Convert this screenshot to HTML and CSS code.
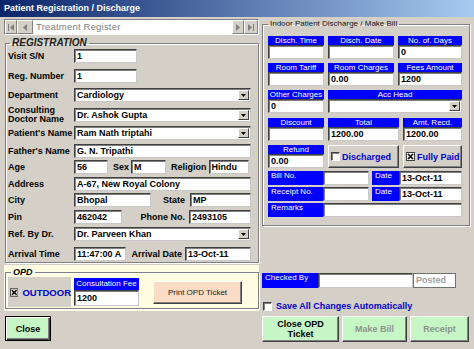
FILE: index.html
```html
<!DOCTYPE html>
<html>

<head>
  <meta charset="UTF-8">
  <title>Patient Registration / Discharge</title>
  <link rel="stylesheet" href="styles.css">
</head>

<body>
  <div class="window">
    <div class="titlebar">Patient Registration / Discharge</div>

    <div class="panes">
      <!-- left side: registration + OPD -->
      <div class="left">
        <div class="navbar">
          <span class="navbtn"><svg width="6" height="7" viewBox="0 0 6 7"><rect x="0" y="0" width="1" height="7" /><path d="M6 0L2 3.5L6 7z" /></svg></span>
          <span class="navbtn wide"><svg width="4" height="7" viewBox="0 0 4 7"><path d="M4 0L0 3.5L4 7z" /></svg></span>
          <span class="navtext">Treatment Register</span>
          <span class="navbtn"><svg width="4" height="7" viewBox="0 0 4 7"><path d="M0 0L4 3.5L0 7z" /></svg></span>
          <span class="navbtn last"><svg width="6" height="7" viewBox="0 0 6 7"><path d="M0 0L4 3.5L0 7z" /><rect x="5" y="0" width="1" height="7" /></svg></span>
        </div>

        <fieldset class="group reg">
          <legend>REGISTRATION</legend>
          <div class="frow"><span class="lbl">Visit S/N</span><span class="field w63">1</span></div>
          <div class="frow gap6"><span class="lbl">Reg. Number</span><span class="field w63">1</span></div>
          <div class="frow gap5"><span class="lbl">Department</span><span class="field select">Cardiology<i class="drop"><svg width="5" height="3" viewBox="0 0 5 3"><path d="M0 0H5L2.5 3z" /></svg></i></span></div>
          <div class="frow gap6"><span class="lbl two">Consulting<br>Doctor Name</span><span class="field select">Dr. Ashok Gupta<i class="drop"><svg width="5" height="3" viewBox="0 0 5 3"><path d="M0 0H5L2.5 3z" /></svg></i></span></div>
          <div class="frow gap4"><span class="lbl">Patient's Name</span><span class="field select">Ram Nath triptahi<i class="drop"><svg width="5" height="3" viewBox="0 0 5 3"><path d="M0 0H5L2.5 3z" /></svg></i></span></div>
          <div class="frow gap4"><span class="lbl">Father's Name</span><span class="field grow">G. N. Tripathi</span></div>
          <div class="frow gap2">
            <span class="lbl">Age</span><span class="field w34">56</span>
            <span class="sub">Sex</span><span class="field w35">M</span>
            <span class="sub">Religion</span><span class="field w40">Hindu</span>
          </div>
          <div class="frow"><span class="lbl">Address</span><span class="field grow">A-67, New Royal Colony</span></div>
          <div class="frow gap2">
            <span class="lbl">City</span><span class="field w77">Bhopal</span>
            <span class="sub push m5">State</span><span class="field w61">MP</span>
          </div>
          <div class="frow">
            <span class="lbl">Pin</span><span class="field w48">462042</span>
            <span class="sub push m4">Phone No.</span><span class="field w62">2493105</span>
          </div>
          <div class="frow"><span class="lbl">Ref. By Dr.</span><span class="field select">Dr. Parveen Khan<i class="drop"><svg width="5" height="3" viewBox="0 0 5 3"><path d="M0 0H5L2.5 3z" /></svg></i></span></div>
          <div class="frow gap6">
            <span class="lbl">Arrival Time</span><span class="field w52">11:47:00 A</span>
            <span class="sub push m3">Arrival Date</span><span class="field w66">13-Oct-11</span>
          </div>
        </fieldset>

        <div class="opd">
          <fieldset class="group">
            <legend>OPD</legend>
            <div class="opd-body">
              <div class="outdoor">
                <svg width="9" height="9" viewBox="0 0 9 9"><rect x="0.5" y="0.5" width="8" height="8" fill="#e8e8e8" stroke="#404040" /><path d="M2 2L7 7M7 2L2 7" stroke="#000" stroke-width="1.6" /></svg>
                OUTDOOR
              </div>
              <div class="fee">
                <span class="head tall">Consultation Fee</span>
                <span class="field big">1200</span>
              </div>
              <button class="print-btn">Print OPD Ticket</button>
            </div>
          </fieldset>
        </div>

        <button class="btn close-btn">Close</button>
      </div>

      <!-- right side: discharge / bill -->
      <div class="right">
        <fieldset class="group indoor">
          <legend>Indoor Patient Discharge / Make Bill</legend>
          <div class="bill-row">
            <div class="cell c56"><span class="head">Disch. Time</span><span class="field"></span></div>
            <div class="cell c66"><span class="head">Disch. Date</span><span class="field"></span></div>
            <div class="cell c64"><span class="head">No. of. Days</span><span class="field">0</span></div>
          </div>
          <div class="bill-row">
            <div class="cell c56"><span class="head">Room Tariff</span><span class="field"></span></div>
            <div class="cell c66"><span class="head">Room Charges</span><span class="field">0.00</span></div>
            <div class="cell c64"><span class="head">Fees Amount</span><span class="field">1200</span></div>
          </div>
          <div class="bill-row">
            <div class="cell c56"><span class="head">Other Charges</span><span class="field">0</span></div>
            <div class="cell c134"><span class="head">Acc Head</span><span class="field select"><span></span><i class="drop"><svg width="5" height="3" viewBox="0 0 5 3"><path d="M0 0H5L2.5 3z" /></svg></i></span></div>
          </div>
          <div class="bill-row gap5">
            <div class="cell c56"><span class="head">Discount</span><span class="field"></span></div>
            <div class="cell c71"><span class="head">Total</span><span class="field">1200.00</span></div>
            <div class="cell c59"><span class="head">Amt. Recd.</span><span class="field">1200.00</span></div>
          </div>
          <div class="bill-row">
            <div class="cell c56"><span class="head">Refund</span><span class="field">0.00</span></div>
            <div class="toggle c71"><span class="chk"></span>Discharged</div>
            <div class="toggle c59">
              <svg width="9" height="9" viewBox="0 0 9 9"><rect x="0.5" y="0.5" width="8" height="8" fill="#f4f4f4" stroke="#404040" /><path d="M2 2L7 7M7 2L2 7" stroke="#000" stroke-width="1.6" /></svg>
              Fully Paid
            </div>
          </div>
          <div class="line-row first">
            <span class="tag t55">Bill No.</span><span class="field w46"></span>
            <span class="tag t27 m3">Date</span><span class="field grow">13-Oct-11</span>
          </div>
          <div class="line-row">
            <span class="tag t55">Receipt No.</span><span class="field w46"></span>
            <span class="tag t27 m3">Date</span><span class="field grow">13-Oct-11</span>
          </div>
          <div class="line-row">
            <span class="tag t55">Remarks</span><span class="field grow"></span>
          </div>
        </fieldset>

        <div class="checked">
          <span class="tag t56">Checked By</span><span class="field w95"></span><span class="posted">Posted</span>
        </div>

        <div class="autosave"><span class="chk"></span>Save All Changes Automatically</div>

        <div class="actions">
          <button class="btn b77">Close OPD<br>Ticket</button>
          <button class="btn b65 off">Make Bill</button>
          <button class="btn b59 off">Receipt</button>
        </div>
      </div>
    </div>
  </div>
</body>

</html>
```

FILE: styles.css
```css
body {
  margin: 0;
  font-family: "Liberation Sans", Arial, sans-serif;
  font-size: 9px;
  background-color: #d4d0c8;
}

.window {
  width: 474px;
  height: 349px;
  overflow: hidden;
  background-color: #d4d0c8;
}

.titlebar {
  height: 17px;
  line-height: 16px;
  padding-left: 4px;
  box-sizing: border-box;
  color: white;
  font-weight: bold;
  background: linear-gradient(to right, #0a246a, #a6caf0);
}

.panes {
  display: flex;
  gap: 3px;
  padding-left: 4px;
}

.left {
  width: 255px;
  flex: none;
  display: flex;
  flex-direction: column;
}

.right {
  width: 208px;
  flex: none;
  display: flex;
  flex-direction: column;
}

/* record navigator */
.navbar {
  margin-top: 2px;
  height: 16px;
  display: flex;
  box-sizing: border-box;
  border: 1px solid;
  border-color: #808080 #fff #fff #808080;
}

.navbtn {
  width: 12px;
  flex: none;
  display: flex;
  align-items: center;
  justify-content: center;
  box-sizing: border-box;
  border: 1px solid;
  border-color: #fff #808080 #808080 #fff;
  fill: #808080;
}

.navbtn.wide {
  width: 16px;
}

.navbtn.last {
  width: 14px;
}

.navtext {
  flex: 1;
  background-color: white;
  color: #808080;
  padding-left: 3px;
  line-height: 14px;
  font-size: 9.5px;
  letter-spacing: 0.2px;
}

/* group boxes */
.group {
  margin: 2px 0 0;
  padding: 0;
  min-width: 0;
  border: 1px solid #808080;
  box-shadow: inset 1px 1px #fff, 1px 1px #fff;
}

.group legend {
  padding: 0 2px;
}

.reg {
  margin-left: 1px;
  padding: 0 7px 1px 2px;
}

.reg legend {
  margin-left: 2px;
  font-size: 10px;
  line-height: 12px;
  font-weight: bold;
  font-style: italic;
  color: #202020;
}

.frow {
  display: flex;
  align-items: center;
  height: 14px;
  margin-top: 3px;
  font-weight: bold;
}

.reg .frow:first-of-type {
  margin-top: 0;
}

.gap2 { margin-top: 2px; }
.gap4 { margin-top: 4px; }
.gap5 { margin-top: 5px; }
.gap6 { margin-top: 6px; }

.lbl {
  width: 66px;
  flex: none;
  white-space: nowrap;
}

.lbl.two {
  line-height: 9px;
}

.sub {
  margin: 0 2px 0 5px;
  white-space: nowrap;
}

.push { margin-left: auto; }
.m3 { margin-right: 3px; }
.m4 { margin-right: 4px; }
.m5 { margin-right: 5px; }

.field {
  height: 14px;
  flex: none;
  box-sizing: border-box;
  padding-left: 2px;
  background-color: white;
  border: 1px solid;
  border-color: #404040 #c8c8c8 #c8c8c8 #404040;
  box-shadow: inset 1px 1px #808080;
  line-height: 12px;
  font-weight: bold;
  white-space: nowrap;
  overflow: hidden;
}

.grow { flex: 1; }

.select {
  flex: 1;
  display: flex;
  align-items: center;
  justify-content: space-between;
  padding-right: 1px;
}

.drop {
  width: 11px;
  height: 10px;
  box-sizing: border-box;
  display: flex;
  align-items: center;
  justify-content: center;
  background-color: #d4d0c8;
  border: 1px solid;
  border-color: #fff #404040 #404040 #fff;
}

.w34 { width: 34px; }
.w35 { width: 35px; }
.w40 { width: 40px; }
.w46 { width: 46px; }
.w48 { width: 48px; }
.w52 { width: 52px; }
.w61 { width: 61px; }
.w62 { width: 62px; }
.w63 { width: 63px; }
.w66 { width: 66px; }
.w77 { width: 77px; }
.w95 { width: 95px; }

/* OPD strip */
.opd {
  margin-top: 2px;
  height: 46px;
  padding-top: 3px;
  box-sizing: border-box;
  background-color: #fffde1;
}

.opd .group {
  margin: 0 0 0 1px;
  padding: 0 0 1px 2px;
}

.opd legend {
  margin-left: 3px;
  font-size: 9px;
  line-height: 9px;
  font-weight: bold;
  font-style: italic;
}

.opd-body {
  display: flex;
  align-items: center;
  height: 30px;
}

.outdoor {
  width: 63px;
  height: 30px;
  box-sizing: border-box;
  padding-left: 2px;
  display: flex;
  align-items: center;
  gap: 4px;
  background-color: #d4d0c8;
  color: #0000cc;
  font-weight: bold;
  font-size: 9.5px;
}

.fee {
  margin-left: 3px;
  width: 65px;
  align-self: flex-start;
  margin-top: 1px;
  display: flex;
  flex-direction: column;
}

.head {
  height: 9px;
  line-height: 9px;
  font-size: 8px;
  color: white;
  background-color: #0000ff;
  text-align: center;
  white-space: nowrap;
  overflow: hidden;
}

.head.tall {
  height: 12px;
  line-height: 12px;
}

.field.big {
  height: 16px;
  line-height: 14px;
}

button {
  font-family: inherit;
  padding: 0;
  cursor: pointer;
}

.print-btn {
  margin-left: 14px;
  width: 89px;
  height: 23px;
  font-size: 8px;
  color: #202020;
  background-color: #fadcc4;
  border: 1px solid;
  border-color: #fff #404040 #404040 #fff;
  box-shadow: inset -1px -1px #808080;
}

.btn {
  height: 26px;
  font-size: 9px;
  font-weight: bold;
  line-height: 10px;
  color: black;
  background-color: #c6f6c6;
  border: 1px solid;
  border-color: #fff #404040 #404040 #fff;
  box-shadow: inset -1px -1px #808080;
}

.btn.off {
  color: #8c948c;
}

.close-btn {
  margin: 5px 0 0 1px;
  width: 46px;
  height: 25px;
  border: 1px solid black;
  box-shadow: inset 1px 1px #fff, inset -1px -1px #404040, inset -2px -2px #808080;
}

/* discharge / bill */
.indoor {
  padding: 7px 7px 8px 5px;
}

.indoor legend {
  font-size: 8px;
  line-height: 10px;
  color: #101010;
}

.bill-row {
  display: flex;
  gap: 4px;
  margin-top: 4px;
}

.indoor .bill-row:first-of-type {
  margin-top: 0;
}

.bill-row.gap5 {
  margin-top: 5px;
}

.cell {
  display: flex;
  flex-direction: column;
}

.c56 { width: 56px; }
.c59 { width: 59px; }
.c64 { width: 64px; }
.c66 { width: 66px; }
.c71 { width: 71px; }
.c134 { width: 134px; }

.toggle {
  height: 23px;
  box-sizing: border-box;
  padding-left: 2px;
  display: flex;
  align-items: center;
  gap: 2px;
  white-space: nowrap;
  color: #0000cc;
  font-weight: bold;
  font-size: 9px;
  border: 1px solid;
  border-color: #fff #404040 #404040 #fff;
  box-shadow: inset -1px -1px #808080;
}

.chk {
  width: 9px;
  height: 9px;
  flex: none;
  box-sizing: border-box;
  background-color: white;
  border: 1px solid;
  border-color: #404040 #fff #fff #404040;
  box-shadow: inset 1px 1px #808080;
}

.line-row {
  display: flex;
  height: 14px;
  margin-top: 2px;
}

.line-row.first {
  margin-top: 3px;
}

.tag {
  flex: none;
  box-sizing: border-box;
  padding-left: 3px;
  font-size: 8px;
  line-height: 10px;
  color: white;
  background-color: #0000ff;
}

.tag.m3 {
  margin: 0 0 0 3px;
}

.t27 { width: 27px; }
.t55 { width: 55px; }
.t56 { width: 56px; }

.checked {
  display: flex;
  height: 15px;
  margin-top: 47px;
}

.checked .field {
  height: 15px;
}

.posted {
  width: 43px;
  box-sizing: border-box;
  padding-left: 2px;
  line-height: 13px;
  background-color: white;
  border: 1px solid #707070;
  color: #a0a0a0;
  font-weight: bold;
}

.autosave {
  display: flex;
  align-items: center;
  gap: 4px;
  height: 10px;
  margin: 13px 0 0 1px;
  color: #0000cc;
  font-weight: bold;
}

.actions {
  display: flex;
  gap: 3px;
  margin-top: 5px;
}

.b77 { width: 77px; }
.b65 { width: 65px; }
.b59 { width: 59px; }
```
